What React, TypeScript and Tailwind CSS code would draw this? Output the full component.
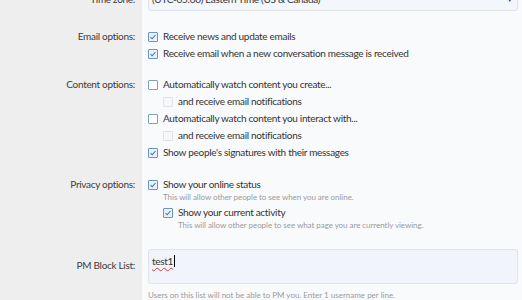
import React from "react";

const font = { fontFamily: 'Lato, "Segoe UI", "Noto Sans", sans-serif' };

function Box({ checked, faint }: { checked?: boolean; faint?: boolean }) {
    return (
        <span
            className={
                "inline-flex h-[10px] w-[10px] shrink-0 items-center justify-center rounded-[1px] border " +
                (faint ? "border-[#dfe3ea] bg-[#f7f8fb]" : checked ? "border-[#6d95c4] bg-[#e9f0f9]" : "border-[#7f9ec4] bg-white")
            }
        >
            {checked && (
                <svg width="8" height="8" viewBox="0 0 8 8">
                    <path d="M1.5 4.2 L3.2 5.8 L6.5 2" fill="none" stroke="#3f78bf" strokeWidth="1.1" />
                </svg>
            )}
        </span>
    );
}

function Check({ text, checked, faint, sub, hint }: { text: string; checked?: boolean; faint?: boolean; sub?: boolean; hint?: string }) {
    return (
        <div className={sub ? "pl-[15px]" : ""}>
            <div className="flex h-[17px] items-center gap-[5px]">
                <Box checked={checked} faint={faint} />
                <span className="text-[10px] tracking-[-0.3px] text-[#333333] whitespace-nowrap">{text}</span>
            </div>
            {hint && <div className="pl-[15px] text-[8px] leading-[9px] tracking-[-0.05px] text-[#9a9a9a] whitespace-nowrap">{hint}</div>}
        </div>
    );
}

function Row({ label, children, pad }: { label: string; children: React.ReactNode; pad: string }) {
    return (
        <div className="flex">
            <div className={"w-[142px] shrink-0 bg-[#eeeeee] pr-[7px] text-right text-[10px] leading-[17px] tracking-[-0.3px] text-[#3c3c3c] " + pad}>{label}</div>
            <div className={"flex-1 bg-[#f9fafc] pl-[6px] pr-[4px] " + pad}>{children}</div>
        </div>
    );
}

export default function App(): JSX.Element {
    return (
        <div className="h-[300px] w-[522px] overflow-hidden bg-[#f9fafc]" style={font}>
            <div className="-mt-[12px]">
                <div className="flex">
                    <div className="flex w-[142px] shrink-0 items-center justify-end bg-[#eeeeee] pr-[7px] text-[10px] tracking-[-0.3px] text-[#3c3c3c]">Time zone:</div>
                    <div className="flex-1 bg-[#f9fafc] pl-[6px] pr-[4px]">
                        <div className="flex h-[23px] items-center justify-between rounded-[3px] border border-[#dfe3ea] bg-[#f3f6fa] pl-[3px] pr-[4px] text-[10px] tracking-[-0.3px] text-[#333333]">
                            <span>(UTC-05:00) Eastern Time (US &amp; Canada)</span>
                            <span className="text-[7px] text-[#333]">▼</span>
                        </div>
                    </div>
                </div>
                <Row label="Email options:" pad="pt-[17px]">
                    <Check checked text="Receive news and update emails" />
                    <Check checked text="Receive email when a new conversation message is received" />
                </Row>
                <Row label="Content options:" pad="pt-[14px]">
                    <Check text="Automatically watch content you create..." />
                    <Check sub faint text="and receive email notifications" />
                    <Check text="Automatically watch content you interact with..." />
                    <Check sub faint text="and receive email notifications" />
                    <Check checked text="Show people's signatures with their messages" />
                </Row>
                <Row label="Privacy options:" pad="pt-[15px]">
                    <Check checked text="Show your online status" hint="This will allow other people to see when you are online." />
                    <div className="h-[2px]" />
                    <Check sub checked text="Show your current activity" hint="This will allow other people to see what page you are currently viewing." />
                </Row>
                <div className="flex">
                    <div className="w-[142px] shrink-0 bg-[#eeeeee] pr-[7px] pt-[27px] text-right text-[10px] leading-[17px] tracking-[-0.3px] text-[#3c3c3c]">PM Block List:</div>
                    <div className="flex-1 bg-[#f9fafc] pl-[6px] pr-[4px] pt-[19px]">
                        <div className="h-[35px] rounded-[3px] border border-[#dfe3ea] bg-[#f1f5fb] px-[3px] pt-[3px] text-[10px] leading-[17px] tracking-[-0.3px] text-[#333333]">
                            <span className="underline decoration-wavy decoration-[#d04040] decoration-[0.5px] underline-offset-2">test1</span>
                            <span className="ml-[1px] inline-block h-[12px] w-[1px] translate-y-[2px] bg-black" />
                        </div>
                        <div className="pt-[6px] text-[8px] leading-[10px] text-[#9a9a9a]">Users on this list will not be able to PM you. Enter 1 username per line.</div>
                    </div>
                </div>
                <div className="flex h-[40px]">
                    <div className="w-[142px] bg-[#eeeeee]" />
                </div>
            </div>
        </div>
    );
}
